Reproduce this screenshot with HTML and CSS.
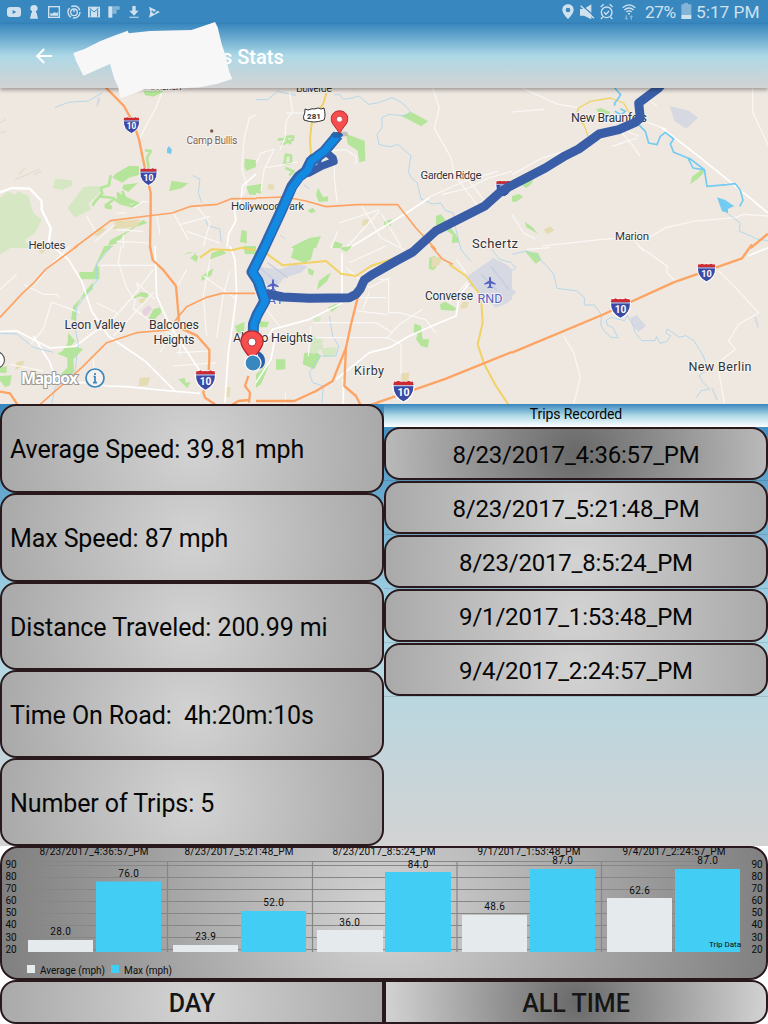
FILE: index.html
```html
<!DOCTYPE html>
<html lang="en">
<head>
<meta charset="utf-8">
<title>Stats</title>
<link rel="stylesheet" href="styles.css">
</head>
<body>
<div class="screen">
  <div class="status">
    <svg class="status-left" width="170" height="24" viewBox="0 0 510 72" aria-hidden="true">
      <rect x="21" y="21" width="42" height="30" rx="9"/><path class="hole" d="M38 30v12l11-6z"/>
      <path d="M102 15a11 11 0 0 1 11 11q0 5-5 7v5h2l4 18H90l4-18h2v-5q-5-2-5-7a11 11 0 0 1 11-11z"/>
      <rect class="line" x="146" y="20" width="32" height="32"/><path d="M151 47V38l6 3 6-5 6 4 5-5v12z"/>
      <circle class="line" cx="222" cy="36" r="18" stroke-dasharray="31 6"/><circle class="line" cx="222" cy="37" r="10"/><path class="line" d="M222 28v9"/>
      <path d="M264 20h36v32h-36z"/><path class="cut thin" d="M271 50V29M293 50V29M268 24l14 12 14-12"/>
      <path d="M325 19h12v34h-12z"/><path class="soft" d="M337 19h22v10h-22zM337 30h13v11h-13z"/>
      <path d="M397 18h10v14h9l-14 15-14-15h9zM388 50h28v3h-28z"/>
      <path d="M447 20l33 16-33 17 4-17z"/><path class="cut" d="M455 32l7 7 17-16"/>
    </svg>
    <div class="status-right">
      <svg width="78" height="24" viewBox="0 0 234 72" aria-hidden="true">
        <path fill-rule="evenodd" d="M18 13c10 0 17 7 17 16 0 12-17 28-17 28S1 41 1 29c0-9 7-16 17-16zm0 10a7 7 0 1 0 0 14 7 7 0 0 0 0-14z"/>
        <path d="M54 27h12l22-14v45L66 47H54z"/><path class="cut" d="M57 14l44 38"/><path class="line" d="M56 17l40 38"/>
        <circle class="line" cx="134" cy="37" r="16"/><path class="line" d="M126 37l6 6 9-10M116 21l9-8M143 13l9 8M122 51l-5 6M146 51l5 6"/>
        <path class="line" d="M182 23q19-17 38 0M187 30q14-12 28 0M193 36q8-7 16 0"/><circle cx="201" cy="41" r="3"/>
        <path class="soft" d="M191 46h4v8h4l-6 6-6-6h4zM206 59h4v-8h4l-6-6-6 6h4z"/>
      </svg>
      <span class="percent">27%</span>
      <svg width="12" height="24" viewBox="0 0 36 72" aria-hidden="true"><path class="soft" d="M4 13h8V9h12v4h10v32H4z"/><path d="M4 45h30v12H4z"/></svg>
      <span class="clock">5:17 PM</span>
    </div>
  </div>

  <header class="appbar">
    <svg class="back" width="16" height="16" viewBox="0 0 16 16" aria-label="Back"><path d="M16 8H1.5M8.2 1 1.2 8l7 7"/></svg>
    <h1>s Stats</h1>
    <svg class="patch" width="170" height="80" viewBox="210 60 510 240" aria-hidden="true"><path d="M220 160l8-4 24-8 48-24 40-16 43-16 3 8 64-7 125-3 70-24 8 16 12 50 12 36 10 45 10 24-47 15-50 10-80 4-90 3-67 26-5-11-3-22-12-26-13-44-80 35-22-45z"/></svg>
  </header>

  <div class="map">
    <svg width="768" height="316" viewBox="0 88 768 316">
      <defs>
        <symbol id="i10" viewBox="0 0 54 54" overflow="visible">
          <path d="M4 3Q8 6 14 2Q21 6 27 3Q33 6 40 2Q46 6 50 3Q50 9 53 15Q53 42 27 54Q1 42 1 15Q4 9 4 3z" fill="#3b4aa5" stroke="#fff" stroke-width="3"/>
          <path d="M4 3Q8 6 14 2Q21 6 27 3Q33 6 40 2Q46 6 50 3L52 12H2z" fill="#cc2a2e"/>
          <path d="M2 14h50" stroke="#fff" stroke-width="2"/>
          <text x="27" y="39" text-anchor="middle" class="shield">10</text>
        </symbol>
        <symbol id="plane" viewBox="0 0 34 36"><path d="M17 0q3 1 3 8v5l14 8v4l-14-4v8l5 4v3l-8-2-8 2v-3l5-4v-8L0 25v-4l14-8V8q0-7 3-8z" fill="#5263c4"/></symbol>
        <symbol id="pin" viewBox="0 0 54 74"><path d="M27 2C41 2 52 12 52 26c0 17-18 27-25 46C20 53 2 43 2 26 2 12 13 2 27 2z" fill="#f84d4d" stroke="#b02a30" stroke-width="3"/><circle cx="27" cy="27" r="9" fill="#fff" stroke="#a83238" stroke-width="2"/></symbol>
      </defs>

      <!-- north-west tile -->
      <g transform="translate(0 88) scale(.33333)">
        <path class="wood" d="M0 330l25-20 20 12 10-12 30 15 15 50 25 20-20 40-30 20 15 25H0zM165 272l50 5 3 15-30 14-30-5zM250 298l48-5 2 20-35 35 10 15-30 15-20 12-22-30z"/>
        <path class="park" d="M345 258l42-25 30 2v26l-30 8-20 15-30-15zM370 290l45-5-18 15-12 12-18-10zM515 278l50 8-20 15-38 9zM735 212l33 5v20l-30 12-5-15zM738 295l30-5v30h-20zM725 425l15 5v36l-20-4zM430 8l50-4 10 8-30 14-25-4z"/>
        <path class="parkline" d="M435 187l18 2-12 20 5 30M332 262l-5 30-25 8 5 16-22 25-8 12M300 325l40 5 20 15 35 10 20-8-40-18-8-20M340 335l-25 20M350 320l50 25"/>
        <path class="park" d="M350 310l28 18 20 15-18 10-28-12zM315 345l22 8-3 12-20-4zM430 395l12 10-35 12-30 20-30 30-25 8 10-20 50-25z"/>
        <path class="sand" d="M345 400l75-6-8 22-75 8zM300 420l20 2-25 22-12-2z"/>
        <path class="airport" d="M293 27l9 6-10 26-3-8z"/>
        <path class="sandline" d="M0 105l18-12M0 134l20-5M55 260l20-20M45 275l75-32M100 260l24-10"/>
        <path class="stream" d="M165 58l40-15 60-4 42-25M578 262l22 12-5 40 10 30M615 385l8 28 36 10 5 40"/>
        <path class="minor" d="M485 15l-20 50-25 45-20 40M768 80l-20 10-15 60-8 90 15 50-10 30M260 385l30 50M350 375l30 0M350 425l80 5M350 460l100 5M520 375l45 80M470 380l10 60M590 355l40 50-20 70M540 410l90-25M560 430l100 35M370 440v40M345 410l-60 50M400 360l30-20 20 3"/>
        <path class="main" d="M0 313l35-13 55 2 35 38 0 25 27 55-8 60"/>
        <path class="main thin" d="M768 258l-40 35-5 40-20 35 5 30-22 40-5 40"/>
        <path class="hwy" d="M317-2l55 56 30 55 15 45 10 50 15 70 10 40v50l-2 118"/>
        <path class="hwy thin" d="M222 480l110-82 110-14 75-9 55-20 80-6 42-17h75"/>
      </g>

      <!-- north-centre tile -->
      <g transform="translate(256 88) scale(.33333)">
        <path class="park" d="M435 84l30-12 52 28-22 15-35-19zM270 138l56 20 2 60-18 5-5-35-30-20zM180 320l8 22 28-2v-15l-15 2-15-28zM385 400l25-6-8 24-18-4zM540 384l15-6 50 70 5 15-23 2 3-25-30-20-20-8zM110 475l50-25 35-5-15 35h-75zM235 460l25 8-5 12h-25zM155 367l16-8 8 12-15 5zM0 290l18-3-3 30-15-3z"/>
        <path class="parkline" d="M65 155l25-2 15 15M75 170l35-15 2-10-28 2M90 200l15 3v22l-20 3zM88 240l24 10-12 12"/>
        <path class="sand" d="M38 288l18 3-5 15-16-3zM320 396l18-3-2 18-18 2z"/>
        <path class="airport" d="M146 289l15 12-2 3-15-10zM72 438l17 14-3 2-15-12z"/>
        <path class="stream" d="M0 35l35 0 30-25 55 12M235 20l15 0 12 14 26-4 20-6 30 25 30-5 40-15 30 15 25 25-10 15-55-5-20 10 0 30-15 20 6 30 18 5 20 2 18-8 28 25 12 10-8 50 12 20 14 10 12 50 35 15 25-3 12 22 25 8 8 50 15 60 30 35"/>
        <path class="minor" d="M100 10l10 60-20 30-3 50-15 35M170 75l-80 0M235 200v70l8 70M210 190l60-5 30 20v25M0 225l15-30 40-12M55 183l-30 60M15 310l10-70 100-18M530 0l20 60-15 60 50 90 10 50 75 100M768 250l-70 20-60 30-80 20M440 385l85-60 100-45 100-30M315 350l60 100 70 35M225 480l20-50M375 375l60 100M640 280l55 70M250 405l120-40M270 480l100-110"/>
        <path class="main thin" d="M280 480l155-95 85-55"/>
        <path class="state" d="M212 12l-10 35-20 30-15 30-5 45 3 50"/>
        <path class="hwy thin" d="M0 330l85-3 65 12 60 17 95-6h120l55 70 60 65"/>
      </g>

      <!-- north-east tile -->
      <g transform="translate(512 88) scale(.33333)">
        <path class="airport" d="M473 54l60 15 25 20-35 33-35-22z"/>
        <path class="park" d="M252 64l15-4 28 12-3 8-18-4-15-2zM540 266l30-22 12 4-25 25-22 15zM0 325l20-8 13 10-20 14H0zM28 290l40-22-10 20-15 12zM38 402l22 14 18 22-35-20z"/>
        <path class="sand" d="M95 425l20-10 12 12-20 12z"/>
        <path class="minor" d="M30 0l105 48 60 10M0 72l95-8M722 0v72l46 100M0 260l90-50 100-30M0 380l35 55 35 18M90 474l180-20 150-10 40-25 90-20 120-10 25-10 75 5M300 175l75-25M310 110l50 60 25 35M400 100l65 25M370 460l25 30M400 25l35 30M320 120l60 25"/>
        <path class="main thin" d="M450 120l110 85 105 85 103 85"/>
        <path class="state thin" d="M228 145l-12-35-28-20 12-30 35-20 60-10 40 15 18 32"/>
        <path class="river thin" d="M308 0l18 20-10 15-8 10 0 8M308 70l20 10 12-10-15-8"/>
        <path class="river thin" d="M380 110l20 20 10 35 25 5 10-25 15-12 25 20-10 15 10 25 50 20 42 32 8 50 60-5 25-3 15 20 8 30-10 18M528 210l15 30 30 5"/>
        <path d="M615 328l25 8 20 14 8 3-20 10 0 12-18-5z" fill="#74cbf2"/>
        <path class="stream" d="M645 375l40 30-3 25 22 8 30 15 35 5"/>
        <path class="hwy" d="M768 437l-52 43"/>
      </g>

      <!-- south-west tile -->
      <g transform="translate(0 246) scale(.33333)">
        <path class="wood" d="M0 0h38L15 18 0 24z"/>
        <path class="park" d="M313 0h27l-25 20-25 35 8 10v35h-60v-22h40l12-28zM280 100l-2 30-35 30-15 25 0 40-15-5 7-40 20-20 12-20 30-35zM205 260l20 25-12 15 37 8-30 32 2 35-20 30-20-20 20-20 0-30-30-12 15-8 15-20zM605 90l35-23-5 20-30 18zM398 155l25-17 24 4-5 14-24-5-18 8zM460 190l20-6 5 15-20 20h-20zM635 20l30-8 15 10-50 18zM730 0h38v25h-33zM705 240l28-12v35h-22zM535 400l20-4 2 14 15-2-10 18zM545 28l25-10 20 3-20 15 20 12 5-15-15-14zM0 390l35-2-5 30-15 6-15-20zM0 365l20-5v20H0z"/>
        <path class="sand" d="M50 348l25-4-10 20-20 8zM420 395l30-1-7 25-28 1zM418 160l22-4-8 16-14-2zM680 424h12l-3 30-14-3zM115 14l25-4-15 14z"/>
        <path d="M428 190l20-12 8 10-10 15-18 12z" fill="#e7d2e0"/>
        <path class="minor" d="M240 200l-85-32-25 80-40 50M70 115l60 30h40l10 10M355 50l25 75 25 40-5 20 55 45M355 50l8-50M300 58l180 0M320 240l80-90 60-80M340 270l120-130M350 200l-60-30M400 190l150 100M480 320l50-80M540 270l0 60M620 270l-10-120 20-110M650 275l20-130 20-70M530 320l100-5M520 360l130-10M560 70l-30 55M610 90l100 70M210 0l-60 60-50 60M280 340l5 85M30 355l100 20M0 130l50-45M465 160l-55-50 5 20"/>
        <path class="main thin" d="M155 0l50 40 40 65 30 90 50 75 110 75 95 95M0 257l50-3 60 32 40 20 75-5 60-45 50-20M100 270l50 80 10 30 20 30h80l60 10 60 2 100 10 120 10M465 0l5 150 40 90 60 90 40 60M690 0l15 40 5 100-10 80-15 100-10 150"/>
        <path class="stream" d="M335 0l-45 55 0 50-30 40-30 40-5 60 10 50-10 80-60 50-10 50M0 262l50 2 50 40 60 15"/>
        <path class="state" d="M600 35l35-25 60 3 30-8 43 8"/>
        <path class="hwy thin" d="M232 0l-95 70-35 40-35 32L0 214M115 480l130-115 75-75 90-30 95-8 30-40 25-30 60-28 45-12h100"/>
        <path class="hwy" d="M450 0l8 42 30 28 40 50 8 92 0 32 55 25 37 42 0 32-3 44M620 380l-10 60 5 15 30 20M0 437l30 5 25 38M745 390l-10 30 15 20-3 30M690 480l25-15 30-3"/>
      </g>

      <!-- south-centre tile -->
      <g transform="translate(256 246) scale(.33333)">
        <path class="airport" d="M0 50l25 15 50 5 35-15 45 5-20 20-50 15-25 30-15 15-45-30zM635 90l65-45 10-10 40 20 18 15v90l-20 15-30 10-50-50-35-20z"/>
        <path class="park" d="M115 0l60 0-10 40-20 10-40-15zM215 85l10-4-12 25-30 25 5-25zM155 65l20 10-5 14-12-5zM552 175l15-8 35 20-8 8-40-4zM475 232l20 8 5 40 20 0-5 25-20-5-15-20 5-15-12-5zM520 35l15-5 20 15-22 28-15-5zM60 340h28v30l-28 2zM145 320l40 0 10 10-20 40-35-15zM215 185l25-12 12 5-25 20zM250 5l40-5-20 18zM10 225l30 4-8 15H10zM0 385l40-35-10 30-15 35-15 10z"/>
        <path class="wood" d="M170 212l25 0-3 15-20 2zM170 270l30 10 0 25-25 20-15-5zM195 307l48-3-5 25-35 5z"/>
        <path class="sand" d="M528 32l28 2-5 22-24 10zM618 168l20 0-5 18-20 2zM435 380l25 0-3 25-20 0z"/>
        <path class="stream" d="M220 210l10 60 18 30-8 30-50 0-30 50 10 30 32 10-4 50M700 0l30 40 38 10"/>
        <path class="minor" d="M270 65l70 60 60-30M370 100h28v100h30l80 20 30 40M310 155h80M305 195l90 10M170 230h190l50 30M180 275h215l40 20v90M340 140l-20 50M165 240l-8 90M640 100l-60 70M500 190l-70 45-40 45M280 50l110-50M300 120l60-40M0 100l100 60M600 40l30 40M0 150l70 90M88 440v35"/>
        <path class="main thin" d="M0 330l50-80 110-30 100-50M0 410l45-70 15-80M240 400l100-80 60-15 60-35 90-40 50-20 10-60 30-40M258 20v140M262 400v80"/>
        <path class="state" d="M0 25l35 0 45 33 45-5 85-8 45 38 45 7 45-30 75-25M580 55l50 35 45 60 5 80-15 65 20 60 35 65 40 60"/>
        <path class="hwy" d="M305 155l-20 80-15 70-40 100-50 30-65 30H0M270 300l-5 120 35 30 15 30M340 478l230-80 198-80"/>
        <path class="hwy thin" d="M525 0l35 40 30 15"/>
        <g stroke="#c7cce0" stroke-width="4"><path d="M5 60l60 50M35 50l60 45M675 85l50 50M705 62l55 70"/></g>
      </g>

      <!-- south-east tile -->
      <g transform="translate(512 246) scale(.33333)">
        <path class="park" d="M38 15l40 6 10 20-17 12z"/>
        <path class="airport" d="M355 215l20-8 27 33-22 18-20-20zM0 128l12 10-12 12zM726 213l6 0 9 30-5 2zM597 425l6 2 15 33-6 2z"/>
        <path class="stream" d="M0 25l45-10 20 10 35 30 25 30 10 42 60 8 22 20 0 22 30 0 22 30-3 30 12 20 20 18 20 0-15-30-18-8-2-15 15-8 40 10 8-15 18 30 5 20 20 25 40 0 5-12 10 20 20-5 12-18-15-8 5-12 15 10 20 15 20-5 25 15 15 25 10 15 10 25-5 30-15 10 12 20 20 20-25 5-15 20M0 55l12 10-12 10"/>
        <path class="minor" d="M380 0l50 35 35 25 0 20 30 30M620 75l50 50 70 75-60 35-30 50 20 25-45 35-5 30 20 110M155 270l30 50 20 75-20 80M45 10l70-5"/>
        <path class="main thin" d="M768 5l-60 25"/>
        <path class="hwy" d="M0 320l270-113 215-98 205-72 30-42"/>
      </g>

      <g class="place air" text-anchor="middle">
        <text x="490" y="303" font-size="12.500" textLength="25">RND</text>
        <text x="271.500" y="304" font-size="12.500" textLength="24">SAT</text>
      </g>
      <use href="#plane" x="267" y="279" width="12" height="12"/>
      <use href="#plane" x="484" y="276.500" width="12" height="12"/>

      <use href="#i10" x="123" y="116.500" width="17" height="17"/>
      <use href="#i10" x="139.500" y="167.500" width="18" height="18"/>
      <use href="#i10" x="195" y="369.500" width="21" height="21"/>
      <use href="#i10" x="392.500" y="380" width="22" height="22"/>
      <use href="#i10" x="610" y="297.500" width="21" height="21"/>
      <use href="#i10" x="697" y="263" width="19" height="19"/>
      <use href="#i10" x="495.500" y="180" width="17" height="17"/>
      <path d="M305 109l3 1q5-2 6-1 5-2 7 0l3-1q1 4 1 7t-1 5q-6 2-10 2t-10-2q-1-4 0-5t1-6z" fill="#fff" stroke="#333" stroke-width="1"/>
      <text class="us" x="314" y="118.500" text-anchor="middle">281</text>

      <g class="place" text-anchor="middle">
        <text x="162" y="90" font-size="10.500" textLength="39">Eld Ranch</text>
        <text x="314" y="91.500" font-size="11" textLength="36">Bulverde</text>
        <text x="212" y="144" font-size="10.500" textLength="51" class="brown">Camp Bullis</text>
        <text x="609" y="122.300" font-size="12.500" textLength="76">New Braunfels</text>
        <text x="451" y="178.500" font-size="11.500" textLength="61">Garden Ridge</text>
        <text x="267.500" y="210" font-size="11.500" textLength="73">Hollywood Park</text>
        <text x="495" y="248" font-size="13" textLength="46">Schertz</text>
        <text x="632" y="240" font-size="11.500" textLength="34">Marion</text>
        <text x="47" y="249" font-size="11.500" textLength="37">Helotes</text>
        <text x="449" y="300" font-size="12" textLength="48">Converse</text>
        <text x="95" y="328.500" font-size="12.500" textLength="61">Leon Valley</text>
        <text x="174" y="328.500" font-size="12.500" textLength="50">Balcones</text>
        <text x="174" y="343.500" font-size="12.500" textLength="41">Heights</text>
        <text x="273" y="342" font-size="12.500" textLength="80">Alamo Heights</text>
        <text x="369" y="374.500" font-size="12.500" textLength="30">Kirby</text>
        <text x="720" y="370.500" font-size="12.500" textLength="63">New Berlin</text>
      </g>
      <circle cx="211.700" cy="131" r="1.700" fill="#7b5a4c"/>
      <path d="M169 146l3 4-1 4-4-1v-4z" fill="#74c9ef"/>

      <path class="route" d="M662 84L658.700 88 638.700 103 640.300 118 635.300 122.300 618.700 129.700 599.300 134 578.700 149 565.300 155.700 545.300 168 512 185.300 501 191.300 484.300 206.300 449.300 224 436 230.700 412.700 252 396 261 372.700 274.300 364.300 280 360 289.300 356 294.300 349.300 297.700 309.300 298.300 282.700 297 266 293.500"/>
      <path class="route spur" d="M326 152L333 158 334 161.500 322 166 309 173M312 158L318 160"/>
      <path class="casing" d="M338 135L324.300 151.300 311 161.300 306 171.300 299.300 176.300 292 186.300 281 211.300 264.300 247.300 252 272 258 281 264.800 301 257 315 253.500 324 253 340"/>
      <path class="track" d="M338 135L324.300 151.300 311 161.300 308 170 300 177.300 292 188 281 212.300 264.300 248.300 252.500 272 258.500 281 265.300 301 257.500 315 254 324 253.500 340"/>
      <ellipse cx="344" cy="134" rx="4" ry="2.500" fill="#999" opacity=".5"/>
      <ellipse cx="337" cy="135" rx="6" ry="3" fill="#2267ad"/>
      <use href="#pin" x="330.500" y="110" width="18" height="25"/>
      <path d="M258 351q7 3 7 10t-7 8z" fill="#2560a8"/>
      <use href="#pin" x="240" y="329.500" width="24" height="34"/>
      <circle cx="253" cy="363" r="8" fill="#3887be" stroke="#fff" stroke-width="1.200"/>
      <circle cx="-3.500" cy="360" r="8" fill="#fff" stroke="#555" stroke-width="1.200"/>
      <text class="brand" x="21" y="383.500" textLength="57">Mapbox</text>
      <circle cx="95" cy="378" r="9" fill="#f4f1ee" stroke="#3887be" stroke-width="1.700"/>
      <path d="M95 373v2M93.500 376.500h1.500v6M93 382.700h4" stroke="#3887be" stroke-width="1.700" fill="none"/>
    </svg>
  </div>

  <main class="panels">
    <section class="stats">
      <div class="card">Average Speed: 39.81 mph</div>
      <div class="card">Max Speed: 87 mph</div>
      <div class="card">Distance Traveled: 200.99 mi</div>
      <div class="card">Time On Road:&nbsp; 4h:20m:10s</div>
      <div class="card">Number of Trips: 5</div>
    </section>
    <section class="trips">
      <h2>Trips Recorded</h2>
      <ul>
        <li><div class="card selected">8/23/2017_4:36:57_PM</div></li>
        <li><div class="card">8/23/2017_5:21:48_PM</div></li>
        <li><div class="card">8/23/2017_8:5:24_PM</div></li>
        <li><div class="card">9/1/2017_1:53:48_PM</div></li>
        <li><div class="card">9/4/2017_2:24:57_PM</div></li>
      </ul>
    </section>
  </main>

  <section class="chart">
    <svg width="768" height="134" viewBox="0 0 768 134">
      <path class="grid" d="M23 15.500H745M23 19.500H745M23 31.500H745M23 43.500H745M23 55.500H745M23 67.500H745M23 79.500H745M23 91.500H745M23 103.500H745M167.500 15V106M312.500 15V106M457 15V106M601.500 15V106"/>
      <g class="avg"><path d="M28 94h65v12H28zM173 99h65v7h-65zM317 84h66v22h-66zM462 69h65v37h-65zM607 52h65v54h-65z"/></g>
      <g class="max"><path d="M96 35.500h65V106H96zM241 65h65v41h-65zM385 26h66v80h-66zM530 23h65v83h-65zM675 23h65v83h-65z"/></g>
      <g class="label" text-anchor="middle">
        <text x="94" y="9.300" textLength="109">8/23/2017_4:36:57_PM</text><text x="239" y="9.300" textLength="109">8/23/2017_5:21:48_PM</text><text x="384" y="9.300" textLength="103">8/23/2017_8:5:24_PM</text><text x="529" y="9.300" textLength="103">9/1/2017_1:53:48_PM</text><text x="674" y="9.300" textLength="103">9/4/2017_2:24:57_PM</text>
        <text x="60.500" y="89" textLength="20.500">28.0</text><text x="128.500" y="31" textLength="20.500">76.0</text><text x="205.500" y="94" textLength="20.500">23.9</text><text x="273.500" y="60" textLength="20.500">52.0</text><text x="349.500" y="80" textLength="20.500">36.0</text><text x="418" y="22" textLength="20.500">84.0</text><text x="494.500" y="64" textLength="20.500">48.6</text><text x="562.500" y="18" textLength="20.500">87.0</text><text x="639.500" y="48" textLength="20.500">62.6</text><text x="707.500" y="18" textLength="20.500">87.0</text>
        <text x="11" y="22">90</text><text x="11" y="34">80</text><text x="11" y="46">70</text><text x="11" y="58">60</text><text x="11" y="70">50</text><text x="11" y="82">40</text><text x="11" y="95">30</text><text x="11" y="107">20</text>
        <text x="757" y="22">90</text><text x="757" y="34">80</text><text x="757" y="46">70</text><text x="757" y="58">60</text><text x="757" y="70">50</text><text x="757" y="82">40</text><text x="757" y="95">30</text><text x="757" y="107">20</text>
      </g>
      <g class="avg"><rect x="27" y="119" width="8" height="8"/></g>
      <g class="max"><rect x="111" y="119" width="8" height="8"/></g>
      <text class="label" x="40" y="128" textLength="65">Average (mph)</text>
      <text class="label" x="124" y="128" textLength="48">Max (mph)</text>
      <text class="label note" x="709" y="101" textLength="32">Trip Data</text>
    </svg>
  </section>

  <nav class="range">
    <button class="day">DAY</button>
    <button class="all">ALL TIME</button>
  </nav>
</div>
</body>
</html>
```

FILE: styles.css
```css
* { box-sizing: border-box; }
body { margin: 0; background: #fff; font-family: Roboto, "Liberation Sans", sans-serif; color: #060606; }
svg { display: block; }
.screen { width: 768px; height: 1024px; display: flex; flex-direction: column; overflow: hidden; }

.status { height: 24px; flex: none; display: flex; justify-content: space-between; background: #3887be; color: #cfe1ef; fill: #cfe1ef; }
.status-right { display: flex; align-items: center; width: 206px; font-size: 17.3px; line-height: 24px; white-space: nowrap; }
.percent { width: 35px; margin-left: 5px; letter-spacing: -.4px; }
.clock { margin-left: 4px; letter-spacing: 0; }
.status .line { fill: none; stroke: #cfe1ef; stroke-width: 4; }
.status .cut { fill: none; stroke: #3887be; stroke-width: 4; }
.status .cut.thin { stroke-width: 3; }
.status .hole { fill: #3887be; }
.status .soft { opacity: .5; }

.appbar { position: relative; z-index: 2; height: 64px; flex: none; display: flex; align-items: center; padding-left: 36px; background: linear-gradient(#3887be, #add8e6 50%, #d3d3d3); box-shadow: 0 2px 4px rgba(0, 0, 0, .35); }
.back { fill: none; stroke: #fff; stroke-width: 2; }
.appbar h1 { margin: 2px 0 0 170px; font-size: 20px; font-weight: 500; line-height: 24px; color: #fff; }
.patch { position: absolute; left: 70px; top: -4px; fill: #f7f7f7; }

.map { height: 316px; flex: none; background: #efe8e1; }
.map path { stroke-linejoin: round; }
.wood { fill: #d5e8c3; }
.park { fill: #b5e59a; }
.parkline { fill: none; stroke: #b5e59a; stroke-width: 8; }
.sand { fill: #e5dcb4; }
.sandline { fill: none; stroke: #e6dbcf; stroke-width: 4; }
.airport { fill: #d7d9e2; }
.stream { fill: none; stroke: #a9d4ec; stroke-width: 2.5; }
.river { fill: none; stroke: #74cbf2; stroke-width: 6; }
.river.thin { stroke-width: 5; }
.minor { fill: none; stroke: #faf8f6; stroke-width: 3.5; }
.main { fill: none; stroke: #fff; stroke-width: 7; }
.main.thin { stroke-width: 5; }
.state { fill: none; stroke: #f0d265; stroke-width: 6; }
.state.thin { stroke-width: 4; }
.hwy { fill: none; stroke: #fda363; stroke-width: 7; }
.hwy.thin { stroke-width: 5; }
.route { fill: none; stroke: #3a5da7; stroke-width: 9; }
.route.spur { stroke-width: 7.5; stroke-linecap: round; }
.casing { fill: none; stroke: #2f66b0; stroke-width: 11; }
.track { fill: none; stroke: #138ae2; stroke-width: 7; }
.shield { font: 700 26px Roboto, sans-serif; fill: #fff; }
.us { font: 700 8px Roboto, sans-serif; fill: #333; }
.place { fill: #30343a; stroke: #f7f3ef; stroke-width: 2px; stroke-linejoin: round; paint-order: stroke; }
.place .brown { fill: #7b6257; }
.place.air { fill: #5263c4; }
.brand { font: 700 16px "Open Sans", sans-serif; fill: #fff; stroke: #9c9893; stroke-width: 2px; paint-order: stroke; }

.panels { height: 442px; flex: none; display: grid; grid-template-columns: 1fr 1fr; background: linear-gradient(#3887be, #add8e6 50%, #d3d3d3); }
.stats { display: grid; grid-template-rows: 89px 89px 88px 88px 88px; }
.card { display: flex; align-items: center; border: 2px solid #2a191c; border-radius: 16px; background: radial-gradient(circle 192px, #d3d3d3, #a9a9a9); font-size: 24px; white-space: pre; }
.stats .card { padding: 2px 0 0 8px; font-size: 25px; letter-spacing: -.1px; }
.trips h2 { height: 23px; margin: 0; padding-top: 2px; text-align: center; font-size: 14px; font-weight: 400; line-height: 17px; letter-spacing: -.1px; background: linear-gradient(#3887be, #add8e6 50%, #fff); }
.trips ul { list-style: none; margin: 0; padding: 0; }
.trips li { height: 54px; border-bottom: 1px solid rgba(0, 0, 0, .12); }
.trips .card { height: 53px; justify-content: center; padding-top: 2px; letter-spacing: -.2px; }
.trips .selected { background: radial-gradient(circle 192px, #696969, #bababa); }

.chart { height: 134px; flex: none; border-radius: 18px; background: radial-gradient(circle 384px, #d3d3d3, #808080); position: relative; overflow: hidden; }
.chart::after { content: ""; position: absolute; inset: 0; border: 2px solid #2a191c; border-radius: 18px; }
.grid { fill: none; stroke: #868686; stroke-width: 1.2; }
.avg { fill: #e5eaed; }
.max { fill: #42cdf5; }
.label { font-size: 10px; fill: #0c0c0c; }
.label.note { font-size: 8px; }

.range { height: 44px; flex: none; display: grid; grid-template-columns: 1fr 1fr; }
.range button { margin: 0; padding: 3px 0 0; border: 2px solid #2a191c; font: 500 25px Roboto, sans-serif; color: #161616; }
.day { border-radius: 16px 0 0 16px; background: radial-gradient(circle 192px, #d3d3d3, #a9a9a9); }
.all { border-radius: 0 16px 16px 0; background: radial-gradient(circle 192px, #696969, #d3d3d3); }
```
